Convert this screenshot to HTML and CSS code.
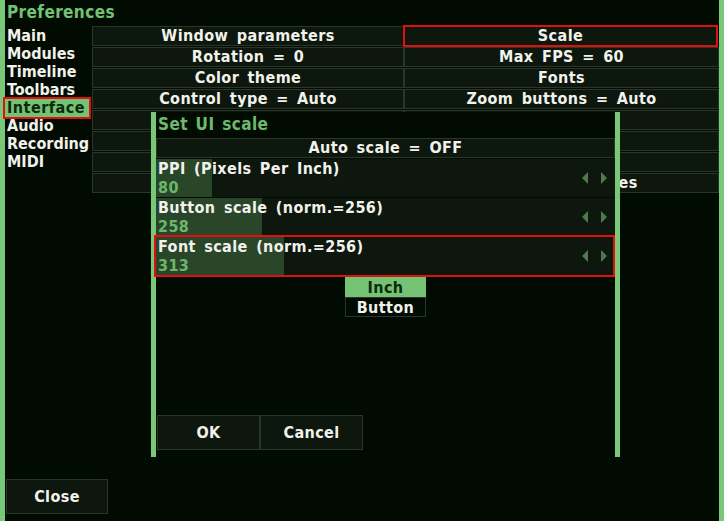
FILE: index.html
```html
<!DOCTYPE html>
<html>
<head>
<meta charset="utf-8">
<link rel="stylesheet" href="styles.css">
</head>
<body>
<div class="app">
  <div class="vbar"></div>
  <div class="content">
    <div class="title">Preferences</div>
    <div class="main">
      <div class="menu">
        <div class="mitem">Main</div>
        <div class="mitem">Modules</div>
        <div class="mitem">Timeline</div>
        <div class="mitem">Toolbars</div>
        <div class="mitem active">Interface</div>
        <div class="mitem">Audio</div>
        <div class="mitem">Recording</div>
        <div class="mitem">MIDI</div>
      </div>
      <div class="grid">
        <div class="cell">Window parameters</div>
        <div class="cell sel">Scale</div>
        <div class="cell">Rotation = 0</div>
        <div class="cell">Max FPS = 60</div>
        <div class="cell">Color theme</div>
        <div class="cell">Fonts</div>
        <div class="cell">Control type = Auto</div>
        <div class="cell">Zoom buttons = Auto</div>
        <div class="cell"></div>
        <div class="cell"></div>
        <div class="cell"></div>
        <div class="cell"></div>
        <div class="cell"></div>
        <div class="cell"></div>
        <div class="cell"></div>
        <div class="cell">Hide system files</div>
      </div>
    </div>
    <div class="bottom">
      <div class="btn close">Close</div>
    </div>

    <div class="dialog">
      <div class="dtitle">Set UI scale</div>
      <div class="dbtn auto">Auto scale = OFF</div>
      <div class="slider">
        <div class="fill" style="width:56px"></div>
        <div class="slabel">PPI (Pixels Per Inch)</div>
        <div class="sval">80</div>
        <div class="arrows"><span class="al"></span><span class="ar"></span></div>
      </div>
      <div class="slider">
        <div class="fill" style="width:106px"></div>
        <div class="slabel">Button scale (norm.=256)</div>
        <div class="sval">258</div>
        <div class="arrows"><span class="al"></span><span class="ar"></span></div>
      </div>
      <div class="slider focus">
        <div class="fill" style="width:128px"></div>
        <div class="slabel">Font scale (norm.=256)</div>
        <div class="sval">313</div>
        <div class="arrows"><span class="al"></span><span class="ar"></span></div>
      </div>
      <div class="units">
        <div class="unit on">Inch</div>
        <div class="unit">Button</div>
      </div>
      <div class="spacer"></div>
      <div class="dfoot">
        <div class="btn fbtn">OK</div>
        <div class="btn fbtn">Cancel</div>
      </div>
    </div>
  </div>
  <div class="vbar"></div>
</div>
</body>
</html>
```
FILE: styles.css
```css
html, body {
  margin: 0;
  padding: 0;
  background: #020b02;
}
body {
  font-family: "DejaVu Sans Condensed", "DejaVu Sans", sans-serif;
  font-weight: bold;
  font-size: 16px;
  letter-spacing: 0.4px;
  word-spacing: 3px;
  color: #f2f2ec;
}
.app {
  display: flex;
  width: 724px;
  height: 521px;
  overflow: hidden;
}
.vbar {
  width: 5px;
  background: #78c878;
  flex: none;
}
.content {
  flex: 1;
  position: relative;
  display: flex;
  flex-direction: column;
}
.title {
  height: 26px;
  line-height: 24px;
  padding-left: 2px;
  color: #74c274;
  font-size: 17px;
}
.main {
  display: flex;
}
.menu {
  width: 87px;
  display: flex;
  flex-direction: column;
  padding-top: 1px;
  letter-spacing: 0;
}
.mitem {
  height: 18px;
  line-height: 18px;
  padding-left: 2px;
  white-space: nowrap;
}
.mitem.active {
  background: #74c274;
  color: #0c2a0c;
  outline: 2px solid #e0100c;
  margin-right: 3px;
  letter-spacing: 0.5px;
}
.grid {
  flex: 1;
  display: grid;
  grid-template-columns: 312px 315px;
  grid-auto-rows: 20px;
  row-gap: 1px;
  column-gap: 0;
}
.cell {
  background: #0d170d;
  border: 1px solid #2b362b;
  box-sizing: border-box;
  text-align: center;
  line-height: 18px;
  white-space: nowrap;
  overflow: hidden;
}
.cell.sel {
  outline: 2px solid #e0100c;
  outline-offset: -1px;
  margin-right: 2px;
}
.bottom {
  margin-top: auto;
  padding: 0 0 7px 1px;
}
.btn {
  background: #0d170d;
  border: 1px solid #2b362b;
  box-sizing: border-box;
  text-align: center;
  white-space: nowrap;
}
.close {
  width: 102px;
  height: 35px;
  line-height: 33px;
}
.dialog {
  position: absolute;
  left: 146px;
  top: 112px;
  width: 459px;
  height: 345px;
  border-left: 5px solid #78c878;
  border-right: 5px solid #78c878;
  background: #020b02;
  display: flex;
  flex-direction: column;
}
.dtitle {
  height: 26px;
  line-height: 24px;
  padding-left: 2px;
  color: #6cba6c;
  font-size: 17px;
  letter-spacing: 0.4px;
  word-spacing: 2px;
}
.dbtn {
  height: 20px;
  line-height: 18px;
  background: #0d170d;
  border: 1px solid #2b362b;
  box-sizing: border-box;
  text-align: center;
  margin-bottom: 1px;
}
.slider {
  position: relative;
  height: 38px;
  background: #0d170d;
  margin-bottom: 1px;
}
.slider.focus::after {
  content: "";
  position: absolute;
  top: -2px;
  bottom: -2px;
  left: -2px;
  right: 0;
  border: 2px solid #e0100c;
}
.fill {
  position: absolute;
  left: 0;
  top: 0;
  bottom: 0;
  background: #2a462a;
}
.slabel {
  position: relative;
  height: 19px;
  line-height: 19px;
  padding-left: 2px;
  white-space: nowrap;
}
.sval {
  position: relative;
  height: 19px;
  line-height: 19px;
  padding-left: 2px;
  color: #6ab86a;
}
.arrows {
  position: absolute;
  right: 8px;
  top: 13px;
  display: flex;
  gap: 13px;
}
.al, .ar {
  width: 0;
  height: 0;
  border-top: 6px solid transparent;
  border-bottom: 6px solid transparent;
}
.al { border-right: 6px solid #4c7a4c; }
.ar { border-left: 6px solid #4c7a4c; }
.units {
  display: flex;
  flex-direction: column;
  align-items: center;
  margin-top: 1px;
}
.unit {
  width: 81px;
  height: 20px;
  line-height: 19px;
  text-align: center;
  box-sizing: border-box;
  border: 1px solid #2b362b;
  background: #020b02;
}
.unit.on {
  background: #74c274;
  border-color: #74c274;
  color: #0c2a0c;
}
.spacer { flex: 1; }
.dfoot {
  display: flex;
  padding: 0 0 7px 1px;
}
.fbtn {
  width: 103px;
  height: 35px;
  line-height: 33px;
}
```
